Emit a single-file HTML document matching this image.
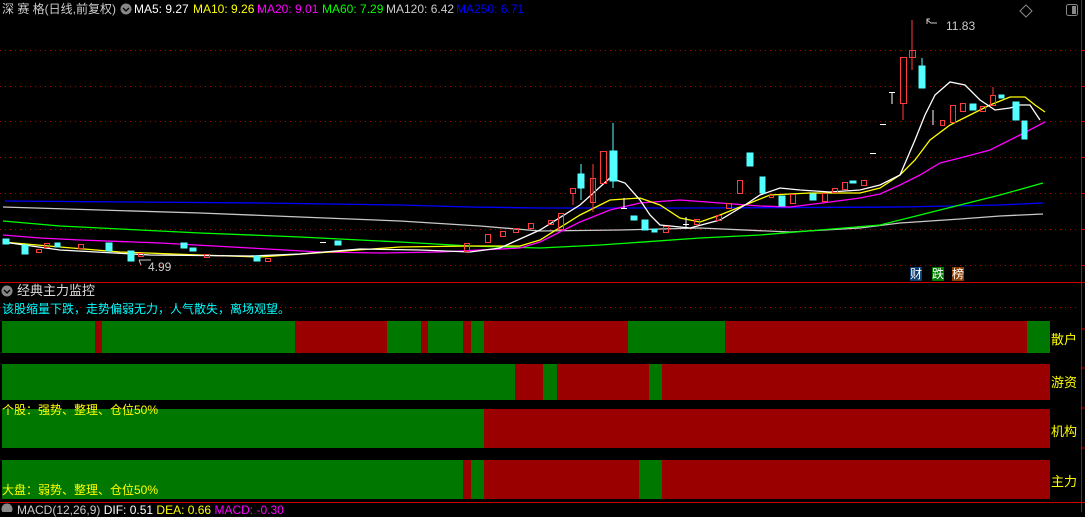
<!DOCTYPE html>
<html><head><meta charset="utf-8"><style>
body{margin:0;background:#000;width:1085px;height:512px;overflow:hidden;position:relative;font-family:"Liberation Sans","Noto Sans CJK SC",sans-serif}
.t{position:absolute;font-size:12px;white-space:nowrap;line-height:14px}
.h{top:2px}
.bar{position:absolute;left:2px;width:1048px;height:32px}
.lab{position:absolute;left:1051px;color:#ff0;font-size:13px}
</style></head><body>
<svg width="1085" height="512" style="position:absolute;left:0;top:0">
<g stroke="#a00" stroke-width="1" stroke-dasharray="1,4">
<line x1="0" y1="50.5" x2="1080" y2="50.5"/><line x1="0" y1="86.5" x2="1080" y2="86.5"/><line x1="0" y1="121.5" x2="1080" y2="121.5"/><line x1="0" y1="157.5" x2="1080" y2="157.5"/><line x1="0" y1="193.5" x2="1080" y2="193.5"/><line x1="0" y1="229.5" x2="1080" y2="229.5"/><line x1="0" y1="265.5" x2="1080" y2="265.5"/><line x1="0" y1="307.5" x2="1080" y2="307.5"/>
</g>
<line x1="0" y1="282.5" x2="1085" y2="282.5" stroke="#c00"/>
<line x1="0" y1="502.5" x2="1085" y2="502.5" stroke="#c00"/>
<line x1="1081.5" y1="0" x2="1081.5" y2="512" stroke="#c00"/>
<g stroke="#c00"><line x1="1082" y1="50.5" x2="1085" y2="50.5"/><line x1="1082" y1="86.5" x2="1085" y2="86.5"/><line x1="1082" y1="121.5" x2="1085" y2="121.5"/><line x1="1082" y1="157.5" x2="1085" y2="157.5"/><line x1="1082" y1="193.5" x2="1085" y2="193.5"/><line x1="1082" y1="229.5" x2="1085" y2="229.5"/><line x1="1082" y1="265.5" x2="1085" y2="265.5"/><line x1="1082" y1="329" x2="1085" y2="329"/><line x1="1082" y1="368" x2="1085" y2="368"/><line x1="1082" y1="408" x2="1085" y2="408"/><line x1="1082" y1="448" x2="1085" y2="448"/></g>
<g fill="none" stroke-width="1.3">
<polyline stroke="#0000ff" points="5,201 130,202 260,203 400,205 470,207 540,208 700,208 900,207 1000,205 1043,203"/>
<polyline stroke="#c8c8c8" points="3,207 100,210 200,213 300,217 400,221 480,226 540,231 620,230 700,228 790,232 860,228 900,223 960,219 1000,216 1043,214"/>
<polyline stroke="#00ff00" points="3,221 60,226 100,228 200,233 300,237 400,242 470,246 540,248 600,245 700,238 760,235 820,230 880,225 920,215 960,205 1000,195 1043,183"/>
<polyline stroke="#ff00ff" points="3,235 40,238 80,240 160,243 250,248 320,252 380,253 440,252 480,250 520,248 540,242 580,222 610,210 640,203 680,200 720,203 760,206 790,207 830,202 860,198 880,194 900,185 920,175 940,163 960,158 990,150 1020,135 1045,122"/>
<polyline stroke="#ffff00" points="3,242 60,247 120,252 200,255 260,257 330,252 400,247 470,246 520,246 540,240 580,215 610,200 640,198 660,205 680,218 700,222 720,215 745,205 770,195 810,193 860,193 880,188 900,175 915,160 930,140 950,125 970,115 990,105 1010,97 1025,97 1035,105 1045,112"/>
<polyline stroke="#ffffff" points="3,242 60,250 150,255 250,256 300,254 360,249 420,250 470,252 500,248 540,230 580,205 610,178 625,183 640,200 650,215 660,225 690,228 720,220 745,205 760,195 780,188 800,190 830,192 860,190 880,185 900,175 915,140 925,115 935,95 950,82 965,85 980,100 995,110 1010,108 1020,105 1030,105 1040,120"/>
</g>
<g fill="#54ffff" stroke="#54ffff">
<rect x="3" y="239" width="6" height="5"/><rect x="22" y="245" width="6" height="9"/><rect x="55" y="243" width="5" height="4"/><rect x="106" y="243" width="6" height="8"/><rect x="128" y="251" width="6" height="10"/><rect x="181" y="243" width="6" height="5"/><rect x="190" y="248" width="6" height="3"/><rect x="254" y="256" width="6" height="5"/><rect x="335" y="241" width="6" height="4"/>
<rect x="578" y="174" width="6" height="14"/><line x1="581" y1="164" x2="581" y2="200"/>
<rect x="610" y="151" width="7" height="30"/><line x1="613" y1="123" x2="613" y2="188"/>
<rect x="631" y="216" width="6" height="4"/><rect x="642" y="220" width="6" height="10"/><rect x="652" y="229" width="5" height="3"/>
<rect x="747" y="153" width="6" height="13"/><rect x="760" y="177" width="5" height="16"/><rect x="779" y="196" width="6" height="10"/><rect x="810" y="194" width="6" height="6"/><rect x="850" y="181" width="6" height="2"/>
<rect x="919" y="66" width="6" height="22"/><line x1="922" y1="58" x2="922" y2="88"/>
<rect x="970" y="104" width="6" height="6"/><rect x="999" y="95" width="5" height="3"/><rect x="1013" y="102" width="6" height="18"/><rect x="1022" y="121" width="5" height="18"/>
</g>
<g fill="none" stroke="#ff3c3c">
<rect x="36.5" y="249.5" width="5" height="3"/><rect x="44.5" y="243.5" width="5" height="4"/><rect x="78.5" y="244.5" width="5" height="4"/><rect x="138.5" y="253.5" width="5" height="3"/><rect x="204.5" y="254.5" width="5" height="3"/><rect x="265.5" y="258.5" width="5" height="3"/><rect x="464.5" y="243.5" width="5" height="8"/><rect x="485.5" y="234.5" width="5" height="8"/><rect x="500.5" y="231.5" width="5" height="5"/><rect x="513.5" y="228.5" width="5" height="4"/><rect x="528.5" y="223.5" width="5" height="5"/><rect x="548.5" y="220.5" width="5" height="4"/><rect x="558.5" y="213.5" width="5" height="16"/>
<rect x="570.5" y="188.5" width="5" height="5"/><line x1="573" y1="193" x2="573" y2="205"/>
<rect x="590.5" y="178.5" width="5" height="24"/><line x1="593" y1="164" x2="593" y2="212"/>
<rect x="600.5" y="151.5" width="6" height="32"/>
<rect x="663.5" y="226.5" width="5" height="6"/><rect x="694.5" y="219.5" width="5" height="5"/><rect x="716.5" y="215.5" width="5" height="5"/><rect x="726.5" y="203.5" width="5" height="5"/><rect x="737.5" y="180.5" width="5" height="13"/><rect x="769.5" y="195.5" width="4" height="2"/><rect x="790.5" y="194.5" width="5" height="9"/><rect x="822.5" y="193.5" width="5" height="8"/><rect x="832.5" y="188.5" width="5" height="4"/><rect x="842.5" y="182.5" width="5" height="7"/><rect x="861.5" y="180.5" width="5" height="5"/>
<rect x="900.5" y="57.5" width="6" height="46"/><line x1="903" y1="103" x2="903" y2="120"/>
<rect x="909.5" y="50.5" width="6" height="7"/><line x1="912" y1="20" x2="912" y2="70"/>
<rect x="940.5" y="120.5" width="4" height="5"/><rect x="950.5" y="105.5" width="5" height="17"/><rect x="960.5" y="103.5" width="5" height="8"/><rect x="980.5" y="106.5" width="5" height="5"/><rect x="990.5" y="95.5" width="5" height="10"/><line x1="993" y1="87" x2="993" y2="95"/>
</g>
<g stroke="#fff"><line x1="892" y1="92" x2="892" y2="104"/><line x1="889" y1="92.5" x2="895" y2="92.5"/><line x1="933" y1="110" x2="933" y2="125"/><line x1="880" y1="124.5" x2="886" y2="124.5"/><line x1="870" y1="153.5" x2="876" y2="153.5"/><line x1="621" y1="208.5" x2="627" y2="208.5"/><line x1="624" y1="198" x2="624" y2="208"/><line x1="686" y1="217" x2="686" y2="227"/><line x1="683" y1="224.5" x2="689" y2="224.5"/><line x1="320" y1="242.5" x2="326" y2="242.5"/></g>
<path d="M141 265 L139 260 M139 260 h12" stroke="#ccc" fill="none"/>
<path d="M927 24 L927 19 h3 M927 20 l4 3 h6" stroke="#ccc" fill="none"/>
<path d="M1026 5 l6 6 -6 6 -6 -6z" stroke="#888" fill="none"/>
<rect x="1066.5" y="4.5" width="11" height="11" rx="2" stroke="#888" fill="none"/><rect x="1072" y="6" width="4" height="8" fill="#888"/>
<circle cx="7" cy="291" r="5.5" fill="#888"/><path d="M4 290 l3 3 3 -3" stroke="#000" fill="none" stroke-width="1.3"/>
<circle cx="126" cy="9" r="5.5" fill="#888"/><path d="M123 8 l3 3 3 -3" stroke="#000" fill="none" stroke-width="1.3"/>
<circle cx="7" cy="509" r="5.5" fill="#888"/>
</svg>
<div class="t h" style="left:2px;color:#ccc">深 赛 格(日线,前复权)</div>
<div class="t h" style="left:134px;color:#fff">MA5: 9.27</div>
<div class="t h" style="left:193px;color:#ff0">MA10: 9.26</div>
<div class="t h" style="left:257px;color:#f0f">MA20: 9.01</div>
<div class="t h" style="left:322px;color:#0f0">MA60: 7.29</div>
<div class="t h" style="left:386px;color:#ccc">MA120: 6.42</div>
<div class="t h" style="left:456px;color:#00f">MA250: 6.71</div>
<div class="t" style="left:946px;top:19px;color:#ccc">11.83</div>
<div class="t" style="left:148px;top:260px;color:#ccc">4.99</div>
<div class="t" style="left:910px;top:267px;color:#fff;background:#0a3c6e">财</div>
<div class="t" style="left:932px;top:267px;color:#fff;background:#007800">跌</div>
<div class="t" style="left:952px;top:267px;color:#fff;background:#8a3c00">榜</div>
<div class="t" style="left:17px;top:284px;color:#ddd;font-size:13px">经典主力监控</div>
<div class="t" style="left:2px;top:302px;color:#0ff">该股缩量下跌，走势偏弱无力，人气散失，离场观望。</div>
<div class="bar" style="top:321px;height:32px;background:linear-gradient(to right,#007800 0 93px,#9a0000 93px 100px,#007800 100px 293px,#9a0000 293px 385px,#007800 385px 419px,#9a0000 419px 426px,#007800 426px 461px,#9a0000 461px 469px,#007800 469px 482px,#9a0000 482px 626px,#007800 626px 723px,#9a0000 723px 1025px,#007800 1025px)"></div>
<div class="bar" style="top:364px;height:36px;background:linear-gradient(to right,#007800 0 513px,#9a0000 513px 541px,#007800 541px 555px,#9a0000 555px 647px,#007800 647px 660px,#9a0000 660px)"></div>
<div class="bar" style="top:409px;height:39px;background:linear-gradient(to right,#007800 0 482px,#9a0000 482px)"></div>
<div class="bar" style="top:460px;height:39px;background:linear-gradient(to right,#007800 0 461px,#9a0000 461px 469px,#007800 469px 482px,#9a0000 482px 637px,#007800 637px 660px,#9a0000 660px)"></div>
<div class="t" style="left:2px;top:403px;color:#ff0">个股：强势、整理、仓位50%</div>
<div class="t" style="left:2px;top:483px;color:#ff0">大盘：弱势、整理、仓位50%</div>
<div class="lab" style="top:329px">散户</div>
<div class="lab" style="top:372px">游资</div>
<div class="lab" style="top:421px">机构</div>
<div class="lab" style="top:471px">主力</div>
<div class="t" style="left:17px;top:503px;color:#ccc">MACD(12,26,9) <span style="color:#fff">DIF: 0.51</span> <span style="color:#ff0">DEA: 0.66</span> <span style="color:#f0f">MACD: -0.30</span></div>
</body></html>
